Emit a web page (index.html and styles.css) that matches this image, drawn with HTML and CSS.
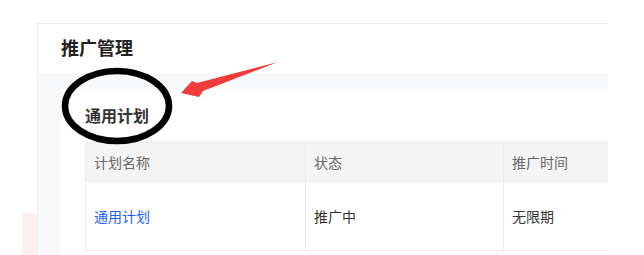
FILE: index.html
```html
<!DOCTYPE html>
<html lang="zh-CN">
<head>
<meta charset="utf-8">
<title>推广管理</title>
<link rel="stylesheet" href="styles.css">
</head>
<body>
<div class="page">
  <div class="gutter"><div class="pink"></div></div>
  <div class="card">
    <div class="card-head"><h1 class="card-title">推广管理</h1></div>
    <div class="card-body">
      <div class="panel">
        <h2 class="section-title">通用计划</h2>
        <table class="plan-table">
          <colgroup>
            <col class="c1"><col class="c2"><col class="c3">
          </colgroup>
          <thead>
            <tr><th>计划名称</th><th>状态</th><th>推广时间</th></tr>
          </thead>
          <tbody>
            <tr><td><a class="plan-link" href="#">通用计划</a></td><td>推广中</td><td>无限期</td></tr>
          </tbody>
        </table>
      </div>
    </div>
  </div>
  <svg class="annot" width="644" height="255" viewBox="0 0 644 255" xmlns="http://www.w3.org/2000/svg">
    <ellipse cx="117" cy="106" rx="52" ry="35" fill="none" stroke="#000" stroke-width="6.5"/>
    <polygon points="181,93 192,81 197,83 278,62 203,91 199,97" fill="#f23b3b"/>
  </svg>
</div>
</body>
</html>
```
FILE: styles.css
```css
html, body {
  margin: 0;
  padding: 0;
  background: #fff;
}
body {
  font-family: "Noto Sans CJK SC", "Noto Sans", sans-serif;
  color: #333;
}
.page {
  position: relative;
  display: flex;
  width: 644px;
  height: 255px;
  padding-top: 23px;
  box-sizing: border-box;
  overflow: hidden;
}
.gutter {
  width: 37px;
  flex: none;
  padding-left: 22px;
  box-sizing: border-box;
}
.pink {
  margin-top: 190px;
  height: 60px;
  background: #fdf0f0;
}
.card {
  width: 570px;
  flex: none;
  border-top: 1px solid #eeeeee;
  border-left: 1px solid #eeeeee;
  display: flex;
  flex-direction: column;
  overflow: hidden;
}
.card-head {
  height: 45px;
  padding: 0 0 4px 23px;
  display: flex;
  align-items: center;
  flex: none;
}
.card-title {
  margin: 0;
  font-size: 18px;
  font-weight: 700;
  line-height: 24px;
  color: #222;
}
.card-body {
  flex: 1;
  background: #f7f8fa;
  padding: 16px 0 0 23px;
  display: flex;
}
.panel {
  flex: 1;
  background: #fff;
  padding: 16px 0 0 24px;
}
.section-title {
  margin: 0 0 17px;
  font-size: 16px;
  font-weight: 700;
  line-height: 20px;
  color: #333;
}
.plan-table {
  border-collapse: separate;
  border-spacing: 0;
  table-layout: fixed;
  width: 620px;
  border-top: 1px solid #ebebeb;
  border-left: 1px solid #ebebeb;
  font-size: 14px;
}
.c1 { width: 220px; }
.c2 { width: 198px; }
.c3 { width: 202px; }
.plan-table th,
.plan-table td {
  border-right: 1px solid #ebebeb;
  border-bottom: 1px solid #ebebeb;
  padding: 0 8px;
  text-align: left;
  font-weight: 400;
  line-height: 20px;
}
.plan-table th {
  height: 38px;
  background: #f4f4f4;
  color: #666;
}
.plan-table td {
  height: 68px;
  color: #333;
}
.plan-link {
  color: #1e5eff;
  text-decoration: none;
}
.annot {
  position: absolute;
  left: 0;
  top: 0;
  pointer-events: none;
}
```
